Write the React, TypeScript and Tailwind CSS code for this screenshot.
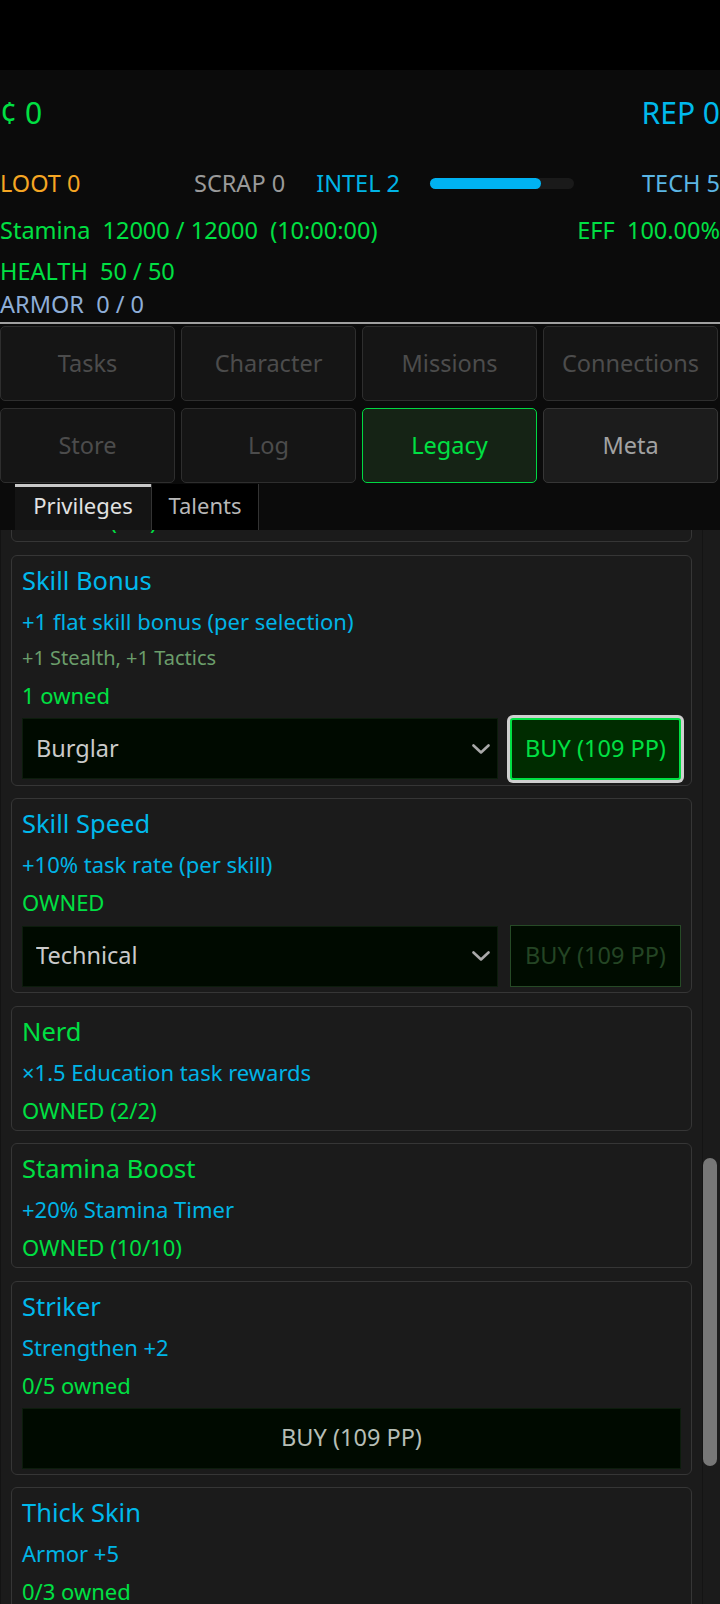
import { useState } from "react";

type Perk = {
    name: string;
    done: boolean;
    desc: string;
    note?: string;
    status: string;
    pick?: string;
    buy?: "active" | "disabled" | "wide";
};

const perks: Perk[] = [
    { name: "Quick Study", done: true, desc: "+10% XP gain", status: "OWNED (1/1)" },
    { name: "Skill Bonus", done: false, desc: "+1 flat skill bonus (per selection)", note: "+1 Stealth, +1 Tactics", status: "1 owned", pick: "Burglar", buy: "active" },
    { name: "Skill Speed", done: false, desc: "+10% task rate (per skill)", status: "OWNED", pick: "Technical", buy: "disabled" },
    { name: "Nerd", done: true, desc: "×1.5 Education task rewards", status: "OWNED (2/2)" },
    { name: "Stamina Boost", done: true, desc: "+20% Stamina Timer", status: "OWNED (10/10)" },
    { name: "Striker", done: false, desc: "Strengthen +2", status: "0/5 owned", buy: "wide" },
    { name: "Thick Skin", done: false, desc: "Armor +5", status: "0/3 owned", buy: "wide" },
];

const skills = ["Burglar", "Technical", "Stealth", "Tactics", "Hacking", "Social"];

const navItems = ["Tasks", "Character", "Missions", "Connections", "Store", "Log", "Legacy", "Meta"];

const Chevron = () => (
    <svg width="18" height="10" viewBox="0 0 18 10" fill="none" className="pointer-events-none absolute right-[8px] top-1/2 -translate-y-1/2">
        <path d="M1.5 1.5 L9 8.5 L16.5 1.5" stroke="#a9a9a9" strokeWidth="2.6" strokeLinecap="round" strokeLinejoin="round" />
    </svg>
);

const PerkCard = ({ perk }: { perk: Perk }) => {
    const [choice, setChoice] = useState(perk.pick ?? "");

    return (
        <div className="flex flex-col rounded-[6px] border border-[#363636] bg-[#1b1b1b] px-[10px] pt-[8px] pb-[5px]">
            <p className={`text-[25.5px] leading-[32px] ${perk.done ? "text-[#00e043]" : "text-[#00b9ec]"}`}>{perk.name}</p>
            <p className="mt-[10px] text-[22px] leading-[30px] text-[#00b4e6]">{perk.desc}</p>
            {perk.note && <p className="mt-[8px] text-[20px] leading-[28px] text-[#6b9e6b]">{perk.note}</p>}
            <p className="mt-[8px] text-[22px] leading-[30px] text-[#00e043]">{perk.status}</p>
            {perk.pick && (
                <div className="mt-[8px] flex items-center gap-[12px]">
                    <div className="relative flex-1">
                        <select
                            value={choice}
                            onChange={(e) => setChoice(e.target.value)}
                            className="h-[61px] w-full appearance-none border border-[#0c1c0c] bg-[#000a00] pl-[13px] text-[23.5px] text-[#cacaca] outline-none"
                        >
                            {skills.map((s) => <option key={s} value={s}>{s}</option>)}
                        </select>
                        <Chevron />
                    </div>
                    {perk.buy === "active" ? (
                        <button className="h-[62px] w-[171px] rounded-[3px] border-2 border-[#00e043] bg-[#002c00] text-[23.5px] text-[#00e043] ring-[3px] ring-[#cfcfcf]">
                            BUY (109 PP)
                        </button>
                    ) : (
                        <button disabled className="h-[62px] w-[171px] border border-[#264a26] bg-[#000c00] text-[23.5px] text-[#244524]">
                            BUY (109 PP)
                        </button>
                    )}
                </div>
            )}
            {perk.buy === "wide" && (
                <button className="mt-[8px] h-[61px] w-full border border-[#0c1c0c] bg-[#000a00] text-[23.5px] text-[#b6beb6]">
                    BUY (109 PP)
                </button>
            )}
        </div>
    );
};

export default function App() {
    const [tab, setTab] = useState("Legacy");
    const [sub, setSub] = useState("Privileges");

    return (
        <div className="flex h-[1604px] w-[720px] flex-col overflow-hidden bg-black text-[22px] font-['Noto_Sans',sans-serif]">
            <div className="h-[70px] shrink-0 bg-black" />

            <div className="shrink-0 bg-[#0b0b0b]">
                <div className="flex justify-between pt-[23px] pb-[2px] text-[30px] leading-[40px]">
                    <span className="text-[#00e043]">¢ 0</span>
                    <span className="text-[#00b9ec]">REP 0</span>
                </div>

                <div className="mt-[32px] flex items-center text-[23.5px] leading-[32px]">
                    <span className="w-[194px] text-[#f5a623]">LOOT 0</span>
                    <span className="text-[#9a9a9a]">SCRAP 0</span>
                    <span className="ml-[31px] text-[#00b4e6]">INTEL 2</span>
                    <div className="ml-[30px] h-[11px] w-[144px] rounded-full bg-[#1a1a1a]">
                        <div className="h-full w-[77%] rounded-full bg-[#00b2f2]" />
                    </div>
                    <span className="ml-auto text-[#5cb6e4]">TECH 5</span>
                </div>

                <div className="mt-[15px] flex justify-between whitespace-pre text-[23.5px] leading-[32px] text-[#00e043]">
                    <span>Stamina  12000 / 12000  (10:00:00)</span>
                    <span>EFF  100.00%</span>
                </div>
                <p className="mt-[9px] whitespace-pre text-[23.5px] leading-[32px] text-[#00e043]">HEALTH  50 / 50</p>
                <p className="mt-[1px] whitespace-pre text-[23.5px] leading-[32px] text-[#8eaed8]">ARMOR  0 / 0</p>

                <div className="mt-[2px] h-[2px] bg-[#a0a0a0]" />

                <div className="mt-[2px] grid grid-cols-4 gap-x-[6px] gap-y-[7px] pr-[2px] pb-[1px]">
                    {navItems.map((item) => {
                        const active = item === tab;
                        const lit = item === "Meta";
                        return (
                            <button
                                key={item}
                                onClick={() => setTab(item)}
                                className={`h-[75px] rounded-[5px] border text-[23.5px] ${
                                    active
                                        ? "border-[#00d843] bg-[#152315] text-[#00e043]"
                                        : lit
                                          ? "border-[#363636] bg-[#1c1c1c] text-[#a2a2a2]"
                                          : "border-[#2e2e2e] bg-[#151515] text-[#4c4c4c]"
                                }`}
                            >
                                {item}
                            </button>
                        );
                    })}
                </div>

                <div className="flex h-[46px] pl-[15px]">
                    {["Privileges", "Talents"].map((t) => (
                        <button
                            key={t}
                            onClick={() => setSub(t)}
                            className={
                                t === sub
                                    ? "w-[136px] border-t-[3px] border-[#c8c8c8] bg-[#141414] pb-[6px] text-[22px] text-[#e2e2e2]"
                                    : "w-[108px] border-x border-[#333] bg-black pb-[4px] text-[22px] text-[#b8b8b8]"
                            }
                        >
                            {t}
                        </button>
                    ))}
                </div>
            </div>

            <div className="flex min-h-0 flex-1 bg-[#1b1b1b]">
                <div className="min-w-0 flex-1 overflow-hidden border-l border-[#131313] pl-[10px] pr-[10px]">
                    <div className="mt-[-113px] flex flex-col gap-[12.5px]">
                        {perks.map((p) => <PerkCard key={p.name} perk={p} />)}
                    </div>
                </div>
                <div className="mr-[2px] w-[16px] border-l border-[#141414] pr-[1px]">
                    <div className="mt-[628px] h-[308px] rounded-full bg-[#777]" />
                </div>
            </div>
        </div>
    );
}
